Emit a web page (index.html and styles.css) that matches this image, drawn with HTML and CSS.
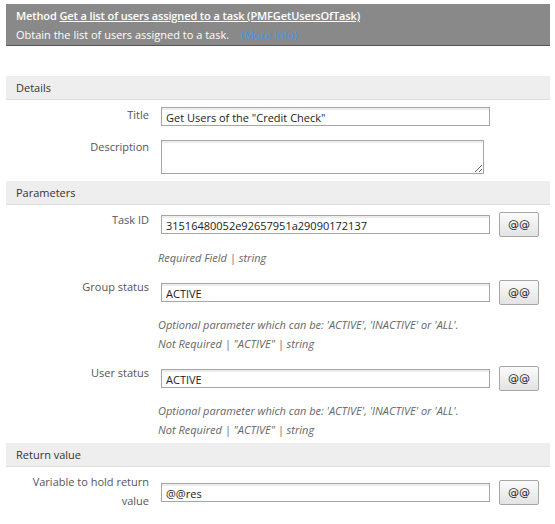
FILE: index.html
```html
<!DOCTYPE html>
<html>
<head>
<meta charset="utf-8">
<link rel="stylesheet" href="styles.css">
</head>
<body>
<div class="page">
  <div class="method">
    <div class="method-line"><b>Method</b> <a class="method-link">Get a list of users assigned to a task (PMFGetUsersOfTask)</a></div>
    <div class="method-desc">Obtain the list of users assigned to a task. <span class="more">(More Info)</span></div>
  </div>

  <div class="bar bar-details">Details</div>
  <div class="row row-title">
    <div class="label">Title</div>
    <input class="field" type="text" value="Get Users of the &quot;Credit Check&quot;">
  </div>
  <div class="row row-desc">
    <div class="label">Description</div>
    <textarea class="area"></textarea>
  </div>

  <div class="bar bar-params">Parameters</div>
  <div class="row row-task">
    <div class="label">Task ID</div>
    <input class="field" type="text" value="31516480052e92657951a29090172137">
    <button class="at">@@</button>
  </div>
  <div class="help">Required Field | string</div>

  <div class="row row-status">
    <div class="label">Group status</div>
    <input class="field" type="text" value="ACTIVE">
    <button class="at">@@</button>
  </div>
  <div class="help">Optional parameter which can be: 'ACTIVE', 'INACTIVE' or 'ALL'.<br>Not Required | "ACTIVE" | string</div>

  <div class="row row-status">
    <div class="label">User status</div>
    <input class="field" type="text" value="ACTIVE">
    <button class="at">@@</button>
  </div>
  <div class="help">Optional parameter which can be: 'ACTIVE', 'INACTIVE' or 'ALL'.<br>Not Required | "ACTIVE" | string</div>

  <div class="bar bar-return">Return value</div>
  <div class="row row-var">
    <div class="label label-wrap">Variable to hold return value</div>
    <input class="field" type="text" value="@@res">
    <button class="at">@@</button>
  </div>
</div>
</body>
</html>
```

FILE: styles.css
```css
html, body {
  margin: 0;
  padding: 0;
  background: #ffffff;
}
body {
  font-family: "Open Sans", "DejaVu Sans", sans-serif;
  font-size: 11px;
  color: #333;
}
.page {
  padding: 4px 5px 0 6px;
  width: 544px;
}
.method {
  background: #898989;
  border-bottom: 1px solid #555;
  color: #fff;
  padding: 2px 10px 4px 10px;
  height: 35px;
  line-height: 19px;
  font-size: 11px;
}
.method-line {
  letter-spacing: -0.12px;
}
.method-line b {
  font-weight: 600;
}
.method-link {
  color: #fff;
  text-decoration: underline;
  font-weight: 600;
}
.more {
  color: #3c9cf0;
  margin-left: 9px;
}
.bar {
  background: #eeeeee;
  border-bottom: 1px solid #dddddd;
  height: 23px;
  line-height: 23px;
  padding-left: 10px;
  color: #333;
}
.bar-details { margin-top: 30px; }
.bar-params { margin-top: 7px; }
.bar-return { margin-top: 4px; }

.row {
  display: flex;
  align-items: flex-start;
}
.label {
  width: 143px;
  text-align: right;
  color: #555;
  line-height: 19px;
  flex: none;
}
.label-wrap { padding-left: 20px; width: 123px; }

.row-title { margin-top: 5px; }
.row-title .field { margin-top: 2px; }

.row-desc { margin-top: 11px; }
.row-desc .area { margin-top: 3px; }

.row-task { margin-top: 5px; }
.row-task .field { margin-top: 5px; }
.row-task .at { margin-top: 2px; }

.row-status { margin-top: 10px; }
.row-status .field { margin-top: 6px; }
.row-status .at { margin-top: 3px; }

.row-var { margin-top: 5px; }
.row-var .field { margin-top: 11px; }
.row-var .at { margin-top: 8px; }

.field {
  box-sizing: border-box;
  margin: 0 0 0 12px;
  width: 329px;
  height: 19px;
  border: 1px solid #a6a6a6;
  box-shadow: inset 0 2px 0 #ececec;
  padding: 1px 4px 0 4px;
  font-family: "Open Sans", "DejaVu Sans", sans-serif;
  font-size: 11px;
  color: #222;
  background: #fff;
  outline: none;
  flex: none;
}
.area {
  box-sizing: border-box;
  margin: 0 0 0 12px;
  width: 323px;
  height: 34px;
  border: 1px solid #a6a6a6;
  box-shadow: inset 0 2px 0 #ececec;
  font-family: "Open Sans", "DejaVu Sans", sans-serif;
  font-size: 11px;
  resize: both;
  padding: 2px 4px;
  flex: none;
}
.at {
  box-sizing: border-box;
  margin-left: 9px;
  width: 40px;
  height: 25px;
  border: 1px solid #a6a6a6;
  border-radius: 2px;
  background: linear-gradient(#fbfbfb, #e3e3e3);
  font-family: "DejaVu Sans", sans-serif;
  font-size: 11px;
  color: #222;
  padding: 0;
  flex: none;
}
.help {
  margin-top: 11px;
  padding-left: 152px;
  font-style: italic;
  color: #666;
  line-height: 19px;
}
.row-status + .help { margin-top: 10px; }
```
